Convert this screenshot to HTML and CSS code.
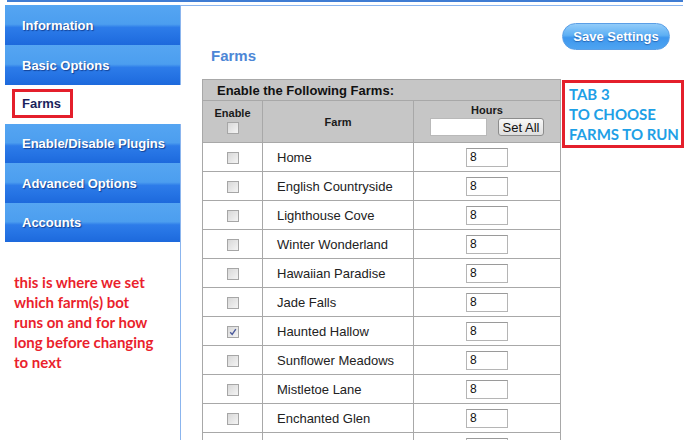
FILE: index.html
```html
<!DOCTYPE html>
<html>
<head>
<meta charset="utf-8">
<link rel="stylesheet" href="styles.css">
</head>
<body>
<div class="topline"></div>
<div class="layout">
  <aside class="sidebar">
    <nav class="tabs">
      <a class="tab t40">Information</a>
      <a class="tab t40">Basic Options</a>
      <a class="tab active"><span class="hl">Farms</span></a>
      <a class="tab">Enable/Disable Plugins</a>
      <a class="tab t40">Advanced Options</a>
      <a class="tab">Accounts</a>
    </nav>
    <p class="note">this is where we set<br>which farm(s) bot<br>runs on and for how<br>long before changing<br>to next</p>
  </aside>
  <main class="content">
    <div class="pagehead">
      <h2 class="title">Farms</h2>
      <button class="save">Save Settings</button>
    </div>
    <table class="farms">
      <colgroup><col class="c1"><col class="c2"><col class="c3"></colgroup>
      <tr class="caption-row"><th colspan="3" class="caption">Enable the Following Farms:</th></tr>
      <tr class="head-row">
        <th class="h-en"><div>Enable</div><span class="cb hcb"></span></th>
        <th class="h-farm">Farm</th>
        <th class="h-hours"><div>Hours</div><div class="setall"><input class="allin" type="text"><button class="setbtn">Set All</button></div></th>
      </tr>
      <tr><td class="en"><span class="cb"></span></td><td class="name">Home</td><td class="hrs"><input class="hin" type="text" value="8"></td></tr>
      <tr><td class="en"><span class="cb"></span></td><td class="name">English Countryside</td><td class="hrs"><input class="hin" type="text" value="8"></td></tr>
      <tr><td class="en"><span class="cb"></span></td><td class="name">Lighthouse Cove</td><td class="hrs"><input class="hin" type="text" value="8"></td></tr>
      <tr><td class="en"><span class="cb"></span></td><td class="name">Winter Wonderland</td><td class="hrs"><input class="hin" type="text" value="8"></td></tr>
      <tr><td class="en"><span class="cb"></span></td><td class="name">Hawaiian Paradise</td><td class="hrs"><input class="hin" type="text" value="8"></td></tr>
      <tr><td class="en"><span class="cb"></span></td><td class="name">Jade Falls</td><td class="hrs"><input class="hin" type="text" value="8"></td></tr>
      <tr><td class="en"><span class="cb checked"><svg width="10" height="10" viewBox="0 0 10 10"><path d="M2.2 5.2 L4.2 7.4 L7.8 2.2" fill="none" stroke="#4b5a9c" stroke-width="1.4"/></svg></span></td><td class="name">Haunted Hallow</td><td class="hrs"><input class="hin" type="text" value="8"></td></tr>
      <tr><td class="en"><span class="cb"></span></td><td class="name">Sunflower Meadows</td><td class="hrs"><input class="hin" type="text" value="8"></td></tr>
      <tr><td class="en"><span class="cb"></span></td><td class="name">Mistletoe Lane</td><td class="hrs"><input class="hin" type="text" value="8"></td></tr>
      <tr><td class="en"><span class="cb"></span></td><td class="name">Enchanted Glen</td><td class="hrs"><input class="hin" type="text" value="8"></td></tr>
      <tr><td class="en"><span class="cb"></span></td><td class="name"></td><td class="hrs"><input class="hin" type="text"></td></tr>
    </table>
    <div class="callout">TAB 3<br>TO CHOOSE<br>FARMS TO RUN</div>
  </main>
</div>
</body>
</html>
```

FILE: styles.css
```css
html, body {
  margin: 0;
  padding: 0;
  overflow: hidden;
  background: #ffffff;
  font-family: "Liberation Sans", Arial, sans-serif;
}

.topline {
  margin-left: 7px;
  width: 676px;
  height: 2px;
  background: #3f7cd3;
}

.layout {
  display: flex;
  margin-top: 3px;
  padding-left: 5px;
}

.sidebar {
  flex: none;
  width: 175px;
  display: flex;
  flex-direction: column;
}

.tabs {
  display: flex;
  flex-direction: column;
}

.tab {
  display: flex;
  align-items: center;
  height: 39px;
  padding-left: 17px;
  color: #ffffff;
  font-weight: bold;
  font-size: 13px;
  text-decoration: none;
  text-shadow: 1px 1px 1px rgba(0, 20, 80, 0.55);
  background: linear-gradient(#55a5f2 0%, #4c9eef 48%, #2d7ce9 56%, #2472e3 80%, #1d69dc 100%);
}

.tab.t40 {
  height: 40px;
}

.tab.active {
  background: #ffffff;
  padding-left: 7px;
  margin-right: -1px;
  position: relative;
  z-index: 1;
  align-items: flex-start;
  padding-top: 4px;
  height: 35px;
  text-shadow: none;
}

.hl {
  border: 3px solid #e41f2b;
  padding: 4px 9px 4px 7px;
  line-height: 15px;
  color: #1b1f5c;
}

.note {
  margin: 30px 0 0 9px;
  font-family: Lato, "Open Sans", sans-serif;
  font-weight: bold;
  font-size: 15px;
  line-height: 20px;
  color: #ea1f2d;
}

.content {
  flex: none;
  width: 503px;
  height: 440px;
  border-left: 1px solid #8bb5ee;
  border-top: 1px solid #8bb5ee;
  padding: 17px 13px 0 21px;
  box-sizing: border-box;
  position: relative;
}

.pagehead {
  display: flex;
  justify-content: space-between;
  align-items: flex-start;
}

.title {
  margin: 24px 0 0 9px;
  font-size: 15px;
  line-height: 18px;
  font-weight: bold;
  color: #4d87d6;
}

.save {
  width: 108px;
  height: 27px;
  border-radius: 14px;
  border: 1px solid #5b9fe6;
  background: linear-gradient(#92ccf9 0%, #5eb0f4 45%, #3e97ee 55%, #4ea4f1 100%);
  color: #ffffff;
  font-family: "Liberation Sans", Arial, sans-serif;
  font-weight: bold;
  font-size: 13px;
  text-shadow: 0 1px 1px rgba(0, 40, 110, 0.45);
  padding: 0;
}

.farms {
  margin-top: 14px;
  border-collapse: collapse;
  table-layout: fixed;
  width: 358px;
  border: 1px solid #9c9c9c;
}

.c1 { width: 60px; }
.c2 { width: 151px; }
.c3 { width: 147px; }

.farms th,
.farms td {
  border: 1px solid #a8a8a8;
  padding: 0;
}

.caption {
  background: #c6c6c6;
  text-align: left;
  padding-left: 14px !important;
  font-size: 13px;
  font-weight: bold;
  color: #111111;
}

.head-row th {
  background: #c6c6c6;
  font-size: 11px;
  font-weight: bold;
  color: #1a1a1a;
  line-height: 14px;
}

.h-en {
  vertical-align: top;
  padding-top: 5px !important;
}

.h-en .hcb {
  display: block;
  margin: 2px auto 0;
}

.h-farm {
  vertical-align: middle;
}

.h-hours {
  vertical-align: top;
  padding-top: 2px !important;
}

.setall {
  display: flex;
  justify-content: center;
  align-items: center;
  gap: 11px;
  margin-top: 1px;
}

.allin {
  width: 57px;
  height: 18px;
  box-sizing: border-box;
  border: 1px solid #b9b9b9;
  background: #ffffff;
  margin: 0;
  padding: 0;
}

.setbtn {
  width: 46px;
  height: 18px;
  box-sizing: border-box;
  margin: 0;
  padding: 0;
  border: 1px solid #8c8c8c;
  border-radius: 3px;
  background: linear-gradient(#f8f8f8, #dedede);
  font-family: "Liberation Sans", Arial, sans-serif;
  font-size: 13px;
  color: #111111;
}

.farms tr {
  height: 29px;
}

.farms tr.caption-row { height: 21px; }
.farms tr.head-row { height: 42px; }

.en {
  text-align: center;
  vertical-align: middle;
}

.cb {
  display: inline-block;
  width: 12px;
  height: 12px;
  box-sizing: border-box;
  border: 1px solid #a6a6a6;
  background: linear-gradient(135deg, #d8d8d8, #f4f4f4);
  vertical-align: middle;
}

.cb svg {
  display: block;
  margin: 0;
}

.name {
  padding-left: 14px !important;
  font-size: 13px;
  color: #222222;
  vertical-align: middle;
}

.hrs {
  text-align: center;
  vertical-align: middle;
}

.hin {
  width: 42px;
  height: 19px;
  box-sizing: border-box;
  border: 1px solid #b5b5b5;
  border-top-color: #9a9a9a;
  margin: 0;
  padding: 0 0 0 3px;
  font-family: "Liberation Sans", Arial, sans-serif;
  font-size: 12px;
  color: #111111;
  vertical-align: middle;
}

.callout {
  position: absolute;
  left: 381px;
  top: 74px;
  width: 122px;
  box-sizing: border-box;
  border: 3px solid #e41f2b;
  padding: 1px 0 1px 4px;
  background: #ffffff;
  font-family: Lato, "Open Sans", sans-serif;
  font-weight: bold;
  font-size: 15px;
  line-height: 20px;
  color: #1ea0e6;
}
```
